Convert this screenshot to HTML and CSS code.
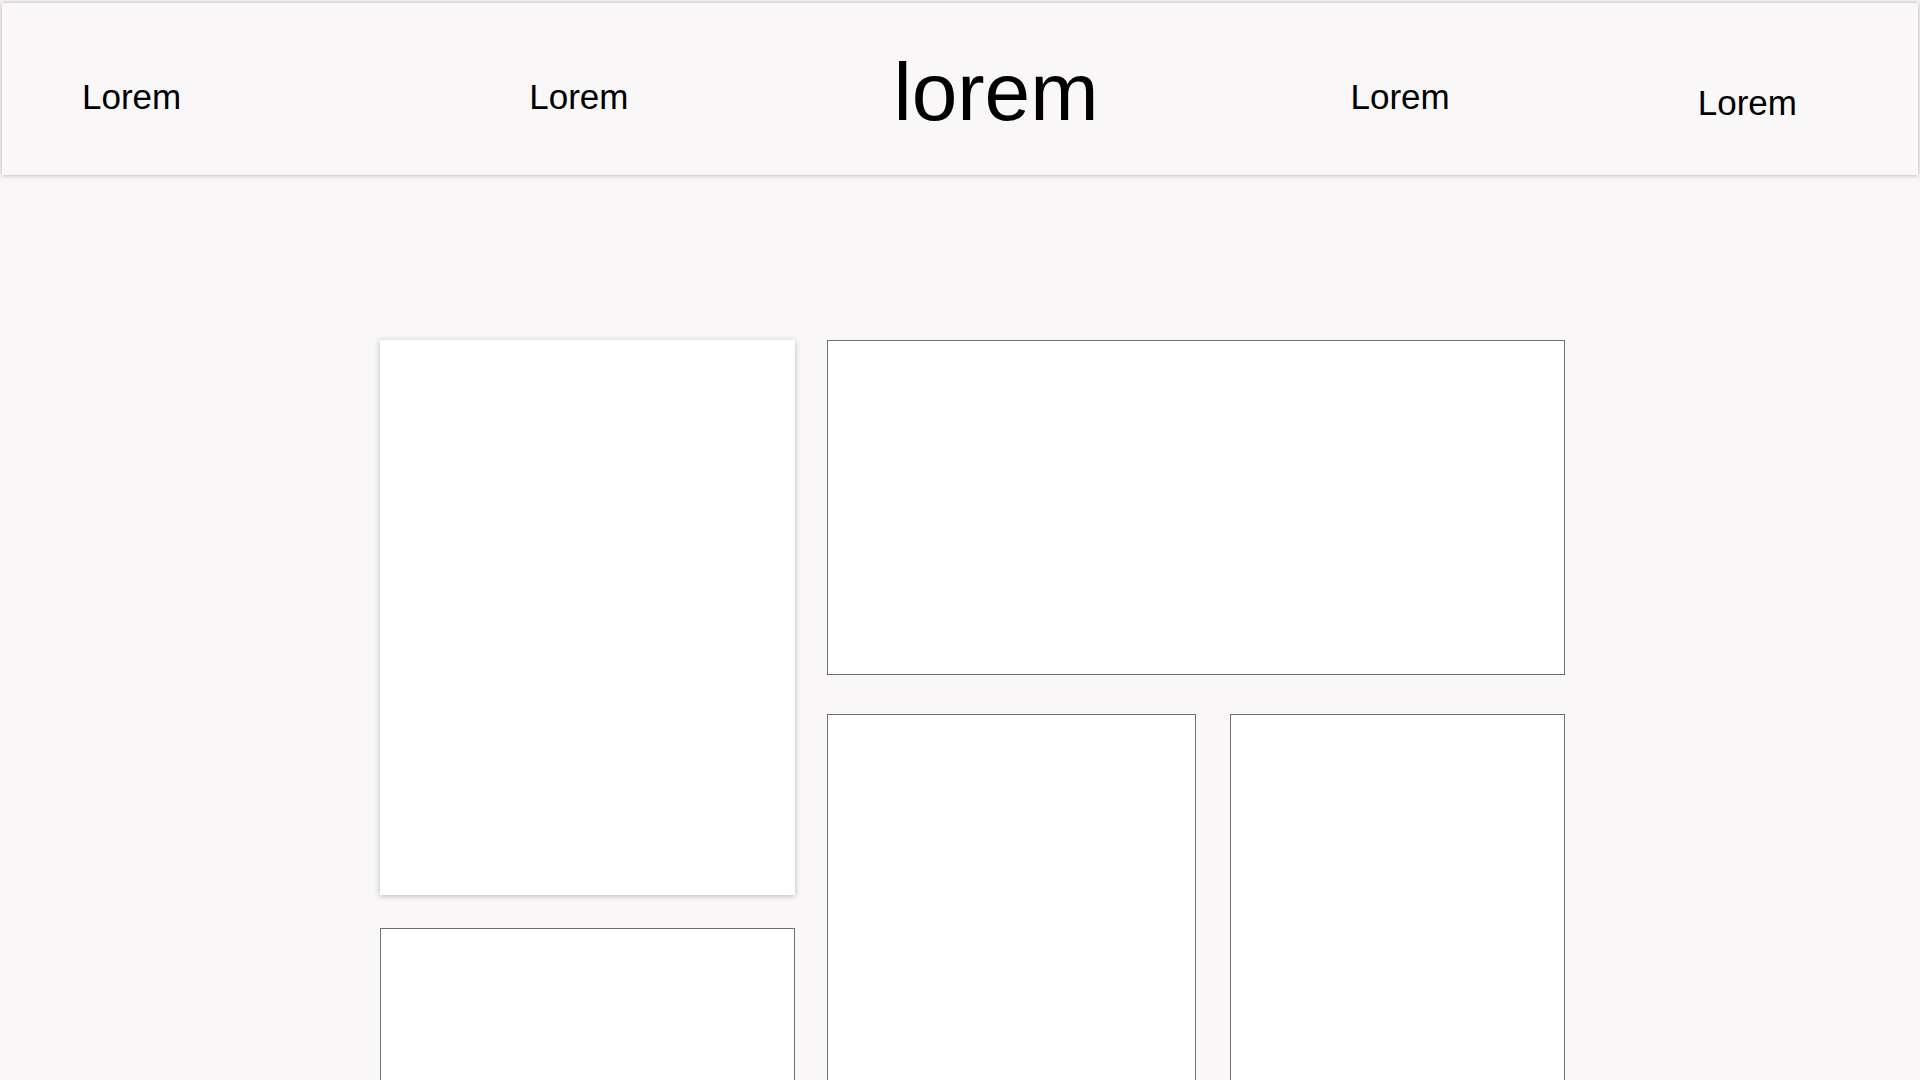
FILE: index.html
```html
<!DOCTYPE html>
<html lang="en">
<head>
<meta charset="utf-8">
<title>lorem</title>
<link rel="stylesheet" href="styles.css">
</head>
<body>
<header class="topbar">
  <span class="nav-item nav-1">Lorem</span>
  <span class="nav-item nav-2">Lorem</span>
  <span class="brand">lorem</span>
  <span class="nav-item nav-4">Lorem</span>
  <span class="nav-item nav-5">Lorem</span>
</header>
<main class="board">
  <div class="col-left">
    <div class="card card-shadow card-tall"></div>
    <div class="card card-outline card-low"></div>
  </div>
  <div class="col-right">
    <div class="card card-outline card-wide"></div>
    <div class="row-bottom">
      <div class="card card-outline card-a"></div>
      <div class="card card-outline card-b"></div>
    </div>
  </div>
</main>
</body>
</html>
```

FILE: styles.css
```css
html, body {
  margin: 0;
  padding: 0;
  background: #f9f7f8;
  overflow: hidden;
  height: 1080px;
}

body {
  font-family: "Liberation Sans", Arial, sans-serif;
  color: #000;
}

.topbar {
  margin: 3px 2px 0 2px;
  height: 172px;
  background: #f9f7f8;
  box-shadow: 0 0 5px rgba(0, 0, 0, 0.3);
  display: flex;
  align-items: flex-start;
  box-sizing: border-box;
  padding-left: 80px;
}

.nav-item {
  font-size: 35px;
  line-height: normal;
  margin-top: 74px;
}

.nav-2 { margin-left: 348px; }
.brand {
  font-size: 82px;
  line-height: normal;
  margin-top: 42px;
  margin-left: 265px;
}
.nav-4 { margin-left: 252px; }
.nav-5 { margin-left: 248px; margin-top: 80px; }

.board {
  display: flex;
  gap: 32px;
  margin-top: 165px;
  margin-left: 380px;
  align-items: flex-start;
}

.col-left {
  display: flex;
  flex-direction: column;
  gap: 33px;
  width: 415px;
}

.col-right {
  display: flex;
  flex-direction: column;
  gap: 39px;
  width: 738px;
}

.row-bottom {
  display: flex;
  gap: 34px;
}

.card {
  background: #fff;
  box-sizing: border-box;
}

.card-outline {
  border: 1px solid #707070;
}

.card-shadow {
  box-shadow: 0 1px 6px rgba(0, 0, 0, 0.25);
}

.card-tall { height: 555px; }
.card-low { height: 400px; }
.card-wide { height: 335px; }
.card-a { width: 369px; height: 500px; }
.card-b { width: 335px; height: 500px; }
```
